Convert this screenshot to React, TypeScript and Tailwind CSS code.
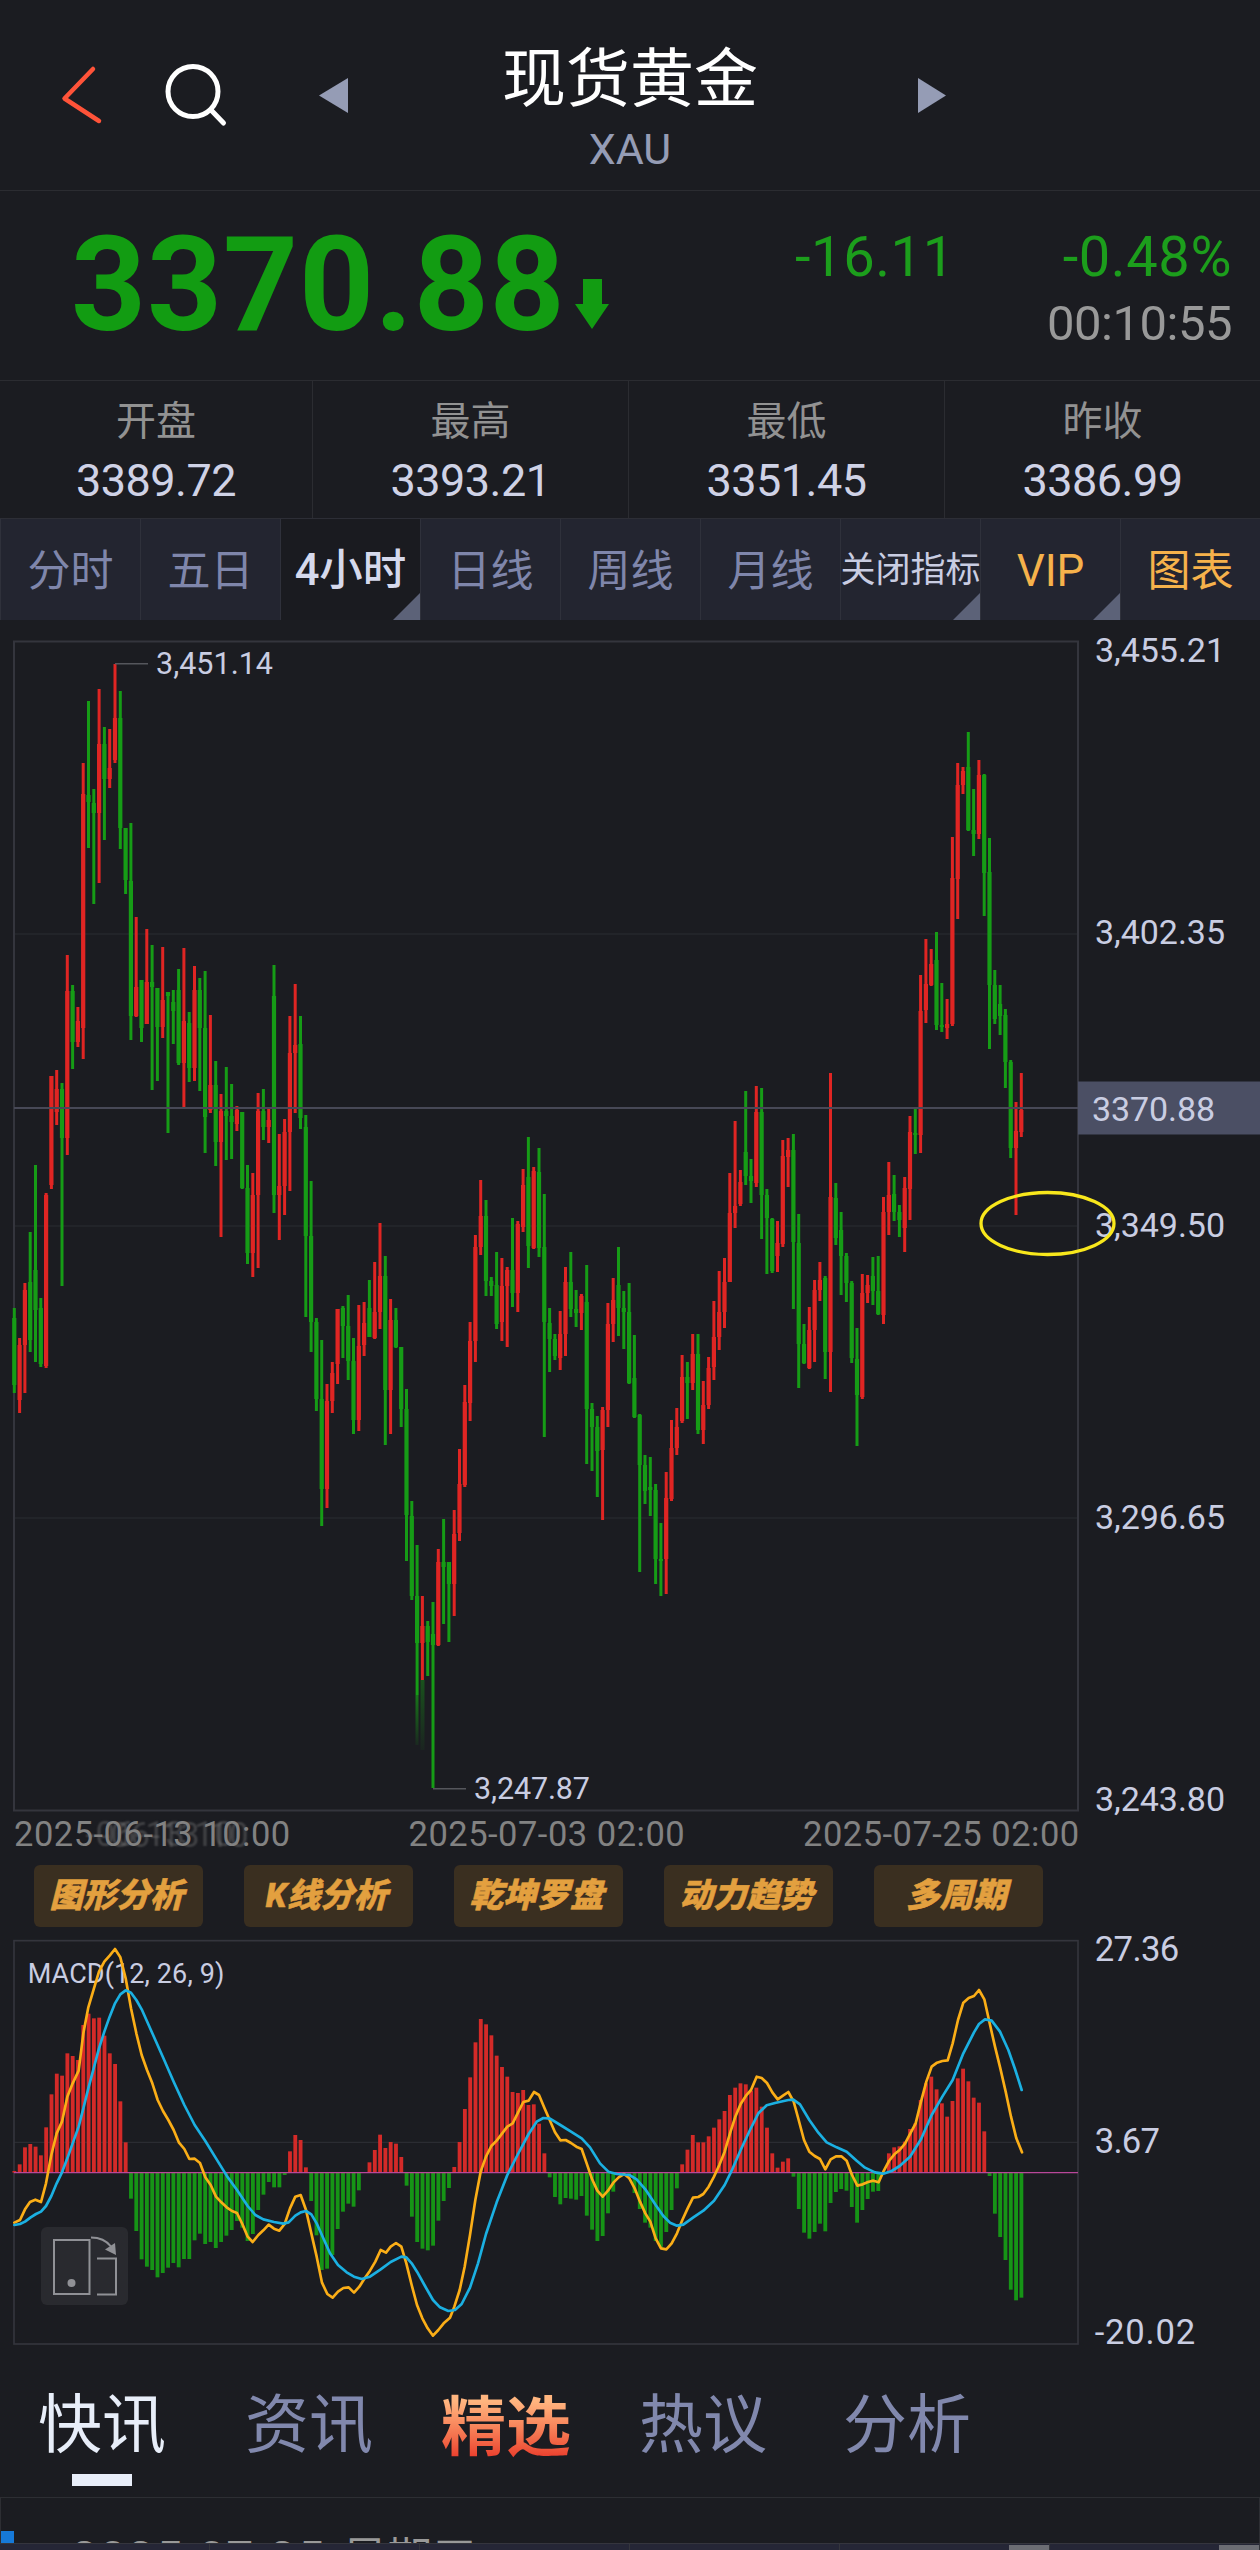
import { useState } from 'react';

const UP = '#e02523';
const DOWN = '#169c16';
const STEP = 5.3;
const FIRST_X = 14.3;

// color, high, body top, body bottom, low
const candles = `
g 1308 1318 1385 1393|r 1338 1345 1400 1413|r 1283 1290 1345 1393|g 1232 1282 1340 1352|g 1165 1270 1310 1362|g 1298 1308 1364 1367|r 1193 1195 1366 1368|r 1076 1076 1185 1189|r 1070 1089 1112 1125|g 1083 1089 1138 1286|
r 955 991 1138 1155|g 985 991 1042 1069|r 1007 1021 1042 1047|r 763 794 1028 1059|g 701 795 802 848|g 789 803 813 904|r 689 744 813 883|g 727 744 779 840|r 729 768 779 788|r 664 718 760 763|
g 691 718 828 849|g 828 828 880 894|g 823 881 1016 1040|r 917 987 1016 1017|g 980 980 1028 1042|r 929 982 1024 1024|g 945 982 987 1090|g 988 988 1027 1081|r 947 1000 1027 1038|g 992 992 996 1133|
g 990 1002 1011 1044|g 969 990 1063 1065|r 948 1021 1063 1109|g 1012 1023 1068 1082|r 966 990 1068 1081|g 978 990 1028 1091|g 971 1028 1117 1153|r 1015 1085 1110 1113|g 1061 1085 1142 1166|r 1094 1111 1142 1237|
g 1067 1111 1116 1160|g 1084 1116 1122 1159|r 1106 1110 1124 1131|g 1112 1112 1188 1189|g 1165 1188 1253 1264|r 1173 1195 1253 1277|r 1093 1111 1195 1268|g 1089 1111 1127 1140|r 1109 1120 1127 1143|g 965 996 1195 1213|
r 1134 1186 1195 1240|r 1119 1132 1186 1215|r 1016 1053 1132 1191|r 984 1045 1053 1113|g 1016 1044 1118 1129|g 1115 1127 1236 1317|g 1181 1236 1322 1352|g 1318 1322 1399 1411|g 1340 1399 1489 1526|r 1384 1401 1489 1508|
r 1362 1373 1401 1413|r 1309 1309 1364 1384|g 1306 1308 1326 1358|g 1295 1326 1361 1380|g 1338 1361 1420 1434|r 1305 1346 1420 1431|r 1302 1323 1345 1356|g 1280 1308 1337 1337|r 1262 1312 1338 1339|r 1223 1276 1312 1329|
g 1256 1276 1390 1445|r 1299 1320 1390 1434|g 1308 1320 1347 1348|g 1347 1347 1409 1427|g 1389 1409 1515 1561|g 1501 1516 1596 1600|g 1545 1596 1643 1695|r 1596 1626 1643 1680|g 1621 1626 1642 1676|g 1602 1634 1645 1788|
r 1549 1562 1645 1646|g 1519 1562 1567 1624|g 1562 1562 1584 1642|r 1510 1534 1584 1616|r 1449 1484 1533 1541|r 1385 1402 1485 1487|r 1322 1341 1403 1421|r 1235 1247 1341 1362|r 1180 1216 1247 1255|g 1200 1216 1281 1296|
g 1277 1281 1286 1296|g 1252 1285 1324 1329|r 1258 1286 1322 1341|r 1267 1270 1286 1347|g 1218 1270 1293 1307|r 1221 1224 1293 1312|r 1169 1185 1227 1232|g 1137 1177 1246 1268|r 1167 1171 1248 1249|g 1148 1172 1248 1257|
g 1194 1247 1322 1437|g 1308 1323 1339 1372|g 1334 1339 1356 1360|r 1311 1334 1358 1370|r 1267 1282 1334 1356|g 1252 1282 1309 1317|g 1290 1309 1313 1327|r 1294 1296 1313 1330|g 1265 1302 1409 1464|g 1403 1409 1427 1471|
g 1416 1427 1451 1497|r 1407 1410 1450 1520|r 1303 1324 1410 1427|r 1278 1300 1324 1342|g 1247 1285 1308 1336|g 1291 1308 1312 1349|g 1283 1312 1383 1384|g 1335 1378 1417 1418|g 1414 1415 1465 1572|g 1455 1465 1491 1504|
g 1457 1487 1490 1516|g 1484 1490 1559 1584|g 1523 1559 1561 1596|r 1472 1498 1559 1594|r 1420 1448 1499 1501|r 1408 1427 1448 1455|r 1355 1377 1421 1423|g 1362 1377 1383 1419|r 1334 1354 1383 1390|g 1334 1354 1430 1434|
r 1381 1405 1430 1444|r 1357 1368 1405 1409|r 1301 1337 1367 1380|r 1271 1312 1337 1350|r 1258 1282 1312 1328|r 1173 1213 1282 1282|r 1121 1206 1213 1228|r 1170 1182 1204 1206|g 1091 1152 1176 1185|g 1159 1176 1181 1203|
r 1086 1112 1183 1187|g 1088 1112 1195 1239|g 1189 1195 1218 1274|g 1218 1219 1271 1273|r 1221 1243 1256 1272|r 1140 1156 1244 1247|r 1138 1150 1157 1187|g 1134 1150 1242 1309|g 1214 1243 1344 1388|g 1324 1344 1363 1364|
r 1307 1330 1368 1369|r 1280 1290 1330 1362|r 1262 1280 1290 1301|g 1276 1278 1352 1379|r 1073 1197 1352 1392|g 1183 1198 1238 1245|g 1212 1230 1256 1295|g 1253 1256 1283 1302|g 1281 1283 1358 1363|g 1328 1359 1395 1446|
r 1274 1293 1397 1399|r 1275 1285 1293 1303|g 1257 1276 1291 1305|g 1256 1291 1314 1315|r 1197 1212 1315 1324|r 1162 1195 1212 1235|g 1175 1194 1212 1221|g 1205 1212 1220 1237|r 1177 1188 1228 1252|r 1116 1132 1189 1220|
g 1109 1133 1134 1154|r 975 1011 1135 1153|r 939 984 1010 1023|r 949 964 985 986|g 932 960 1025 1030|g 983 1025 1027 1032|r 999 1024 1028 1039|r 837 878 1024 1026|r 763 785 879 919|r 767 771 785 794|
g 732 767 830 831|g 789 830 834 856|r 760 775 834 839|g 774 775 873 916|g 838 872 985 1049|g 970 985 1019 1024|g 985 1004 1016 1035|g 1009 1015 1062 1088|g 1060 1062 1148 1158|r 1102 1131 1148 1215|
r 1073 1110 1132 1137`
  .split('|')
  .map((row) => {
    const [dir, ...nums] = row.trim().split(' ');
    const [high, top, bottom, low] = nums.map(Number);
    return { color: dir === 'r' ? UP : DOWN, high, top, bottom, low };
  });

// MACD panel is drawn on a 3x grid, zero line at 758
const ZERO = 758;
const bars = [
  753, 733, 682, 672, 680, 706, 622, 523, 461, 467, 400, 408, 420, 315, 281, 295, 293, 347, 400, 432, 544, 667, 836, 933,
  1018, 1040, 1050, 1072, 1059, 1043, 1029, 1042, 1017, 1017, 961, 941, 972, 966, 984, 966, 947, 930, 903, 923, 963, 942,
  870, 824, 786, 802, 802, 765, 694, 645, 660, 742, 843, 946, 1050, 1046, 1005, 927, 875, 851, 860, 811, 758, 727, 690,
  644, 684, 666, 671, 711, 797, 890, 966, 986, 991, 977, 902, 843, 804, 741, 666, 567, 472, 367, 297, 313, 346, 407, 441,
  470, 516, 519, 510, 555, 553, 611, 700, 772, 831, 853, 834, 836, 839, 828, 887, 929, 963, 948, 880, 815, 765, 758, 766,
  819, 867, 908, 923, 963, 982, 936, 870, 805, 733, 689, 645, 667, 667, 649, 623, 598, 573, 525, 503, 490, 493, 512, 503,
  560, 623, 700, 743, 725, 715, 770, 867, 938, 956, 936, 911, 934, 849, 816, 807, 812, 861, 908, 870, 837, 815, 813, 758,
  700, 682, 679, 665, 627, 610, 540, 490, 470, 508, 550, 590, 543, 475, 446, 484, 533, 548, 634, 768, 881, 951, 1020, 1109,
  1141, 1133,
];

const difLine =
  '43,908 60,900 75,868 90,846 106,839 123,846 138,790 154,705 170,640 186,605 202,530 218,490 236,452 250,340 265,262 281,208 297,155 313,125 329,107 345,87 361,112 377,175 393,265 409,340 425,405 441,450 457,490 473,540 489,573 505,600 521,630 537,668 553,687 568,717 584,716 600,729 616,772 632,795 648,830 664,847 680,862 696,873 711,879 727,912 743,950 758,966 775,945 790,931 806,914 822,926 838,932 854,912 870,865 886,830 902,825 918,870 934,940 950,1010 966,1088 982,1122 998,1133 1014,1115 1030,1104 1046,1102 1062,1118 1078,1100 1094,1075 1110,1052 1126,1025 1142,990 1158,998 1172,980 1188,969 1204,980 1219,1030 1235,1095 1251,1155 1267,1195 1283,1225 1299,1247 1315,1230 1331,1210 1350,1193 1363,1160 1379,1110 1394,1040 1410,945 1426,840 1442,755 1458,710 1474,678 1490,662 1506,641 1522,620 1538,610 1554,578 1570,546 1586,542 1602,516 1617,525 1633,563 1649,600 1665,637 1681,661 1697,660 1713,669 1729,680 1745,687 1760,730 1776,777 1792,812 1808,830 1824,812 1840,788 1856,772 1872,762 1888,775 1904,805 1920,845 1936,880 1951,905 1967,955 1983,985 1999,988 2015,970 2031,940 2047,900 2063,865 2079,833 2095,831 2110,822 2126,800 2142,770 2158,735 2174,695 2190,640 2206,590 2222,552 2238,527 2253,510 2270,470 2285,474 2301,489 2317,517 2333,538 2349,527 2365,516 2381,545 2396,600 2412,660 2428,695 2444,708 2460,717 2476,748 2492,718 2508,709 2524,709 2540,722 2556,765 2572,797 2588,793 2604,786 2620,782 2636,787 2650,755 2667,723 2683,703 2699,690 2715,671 2731,640 2747,610 2763,545 2779,485 2795,440 2811,428 2827,423 2843,421 2858,370 2874,300 2890,248 2906,234 2922,228 2937,210 2953,238 2969,310 2985,380 3001,445 3017,515 3033,590 3049,655 3066,697';

const deaLine =
  '43,915 60,912 75,905 92,892 108,882 123,875 138,858 154,828 170,790 186,757 202,715 218,670 236,620 250,565 265,505 281,445 297,385 313,335 329,290 345,250 361,223 377,211 393,218 409,240 425,268 457,340 489,412 521,485 553,555 584,615 616,663 648,715 680,767 711,810 743,858 766,885 790,898 822,906 850,911 866,907 886,887 902,877 918,873 934,883 950,910 970,955 990,1000 1014,1035 1040,1057 1062,1070 1085,1077 1110,1070 1142,1048 1172,1026 1204,1010 1219,1012 1235,1030 1251,1055 1275,1098 1299,1140 1320,1162 1345,1173 1365,1170 1385,1152 1410,1103 1434,1030 1458,942 1490,847 1522,765 1554,702 1586,642 1610,605 1630,594 1650,596 1681,615 1713,635 1745,655 1770,682 1800,730 1825,755 1850,762 1888,765 1910,778 1936,808 1967,855 1990,888 2010,908 2031,917 2050,914 2079,893 2110,872 2142,842 2174,795 2195,752 2222,690 2250,630 2275,580 2300,556 2325,549 2365,540 2380,539 2400,553 2428,600 2455,638 2480,667 2510,682 2540,695 2570,722 2595,743 2625,757 2650,761 2675,753 2699,738 2730,710 2763,658 2795,585 2827,530 2858,480 2890,400 2922,337 2937,312 2955,298 2975,302 3000,335 3025,390 3045,447 3065,510';

const stats = [
  { label: '开盘', value: '3389.72' },
  { label: '最高', value: '3393.21' },
  { label: '最低', value: '3351.45' },
  { label: '昨收', value: '3386.99' },
];

const periods = [
  { label: '分时', className: 'text-[43px] text-[#7f86ab]' },
  { label: '五日', className: 'text-[43px] text-[#7f86ab]' },
  { label: '4小时', className: 'text-[43.500px] font-medium text-[#d5d9ec]', corner: true },
  { label: '日线', className: 'text-[43px] text-[#7f86ab]' },
  { label: '周线', className: 'text-[43px] text-[#7f86ab]' },
  { label: '月线', className: 'text-[43px] text-[#7f86ab]' },
  { label: '关闭指标', className: 'text-[35px] text-[#c9cde2]', corner: true },
  { label: 'VIP', className: 'text-[44px] text-[#f6b24b]', corner: true },
  { label: '图表', className: 'text-[43px] text-[#f6b24b]' },
];

const tools = ['图形分析', 'K线分析', '乾坤罗盘', '动力趋势', '多周期'];

const priceAxis = [
  { text: '3,455.21', y: 662 },
  { text: '3,402.35', y: 944 },
  { text: '3,349.50', y: 1236.5 },
  { text: '3,296.65', y: 1528.5 },
  { text: '3,243.80', y: 1811 },
];

function Header() {
  return (
    <header className="h-[191px] border-b border-[#2b2c31] flex items-start">
      <svg className="w-[360px] h-[190px] shrink-0" viewBox="0 0 360 190" fill="none">
        <path d="M93 69 64.5 98.500 99 121" stroke="#ff5339" strokeWidth="4.500" strokeLinecap="round" strokeLinejoin="round" />
        <circle cx="193" cy="91.500" r="25" stroke="#fff" strokeWidth="5" />
        <path d="M211 110l12.500 13" stroke="#fff" strokeWidth="5" strokeLinecap="round" />
        <path d="M348 78v35l-29-17.500z" fill="#959cb5" />
      </svg>
      <div className="w-[540px] pt-[45px] flex flex-col items-center">
        <h1 className="text-[64px] leading-[70px] text-white">现货黄金</h1>
        <div className="mt-[9px] text-[43px] leading-[50px] text-[#959cb5]">XAU</div>
      </div>
      <svg className="w-[60px] h-[190px] shrink-0" viewBox="900 0 60 190">
        <path d="M918 78v35l28-17.500z" fill="#959cb5" />
      </svg>
    </header>
  );
}

function Quote() {
  return (
    <section className="h-[190px] border-b border-[#2b2c31] flex justify-between pl-[71px] pr-[28px]">
      <div className="flex text-[#129c12]">
        <span className="pt-[29px] text-[131px] leading-[130px] font-bold tracking-[0.8px]">3370.88</span>
        <svg className="ml-[9px] mt-[88px] w-[34px] h-[50px]" viewBox="0 0 34 50">
          <path d="M8 0h19v25h7L17 50 0 25h8z" fill="#129c12" />
        </svg>
      </div>
      <div className="flex flex-col items-end">
        <div className="mt-9 flex gap-[108px] text-[56px] leading-[60px] tracking-[0.6px] text-[#1c9e1c]">
          <span>-16.11</span>
          <span>-0.48%</span>
        </div>
        <div className="mt-[7px] text-[49px] leading-[60px] tracking-[-0.5px] text-[#999]">00:10:55</div>
      </div>
    </section>
  );
}

function Stats() {
  return (
    <section className="h-[137px] grid grid-cols-[313px_316px_316px_315px]">
      {stats.map((s) => (
        <div key={s.label} className="border-r border-[#2b2c31] last:border-r-0 flex flex-col items-center pt-[17px]">
          <div className="text-[40px] leading-[48px] text-[#929292]">{s.label}</div>
          <div className="mt-[7px] text-[45px] leading-[56px] tracking-[-0.500px] text-[#cfd2e6]">{s.value}</div>
        </div>
      ))}
    </section>
  );
}

function Periods() {
  const [active, setActive] = useState('4小时');

  return (
    <nav className="h-[102px] grid grid-cols-9 border-t border-[#2d2e36]">
      {periods.map((p) => (
        <button
          key={p.label}
          onClick={() => setActive(p.label)}
          className={`relative border-l border-[#2f313b] pt-[3px] whitespace-nowrap flex items-center justify-center ${p.className} ${active === p.label ? 'bg-[#1a1b20]' : 'bg-[#232530]'}`}
        >
          {p.label}
          {p.corner && (
            <svg className="absolute right-0 bottom-0 w-[27px] h-[27px]" viewBox="0 0 27 27">
              <path d="M27 0v27H0z" fill="#5c6278" />
            </svg>
          )}
        </button>
      ))}
    </nav>
  );
}

function CandleChart() {
  return (
    <svg className="block w-[1260px] h-[1195px] overflow-visible" viewBox="0 620 1260 1195">
      <defs>
        <linearGradient id="fade-green" x1="0" y1="0" x2="0" y2="1">
          <stop offset="0" stopColor="#169c16" stopOpacity="0.700" />
          <stop offset="1" stopColor="#169c16" stopOpacity="0.100" />
        </linearGradient>
      </defs>
      {[934, 1226, 1518].map((y) => (
        <path key={y} d={`M14 ${y}H1078`} stroke="#26272c" strokeWidth="1.300" />
      ))}
      <rect x="14" y="641.500" width="1064" height="1169" fill="none" stroke="#34353d" strokeWidth="2" />

      {candles.map((c, i) => {
        const x = FIRST_X + i * STEP;
        return (
          <g key={i} fill={c.color}>
            <rect x={x - 1.5} y={c.high} width="3" height={c.low - c.high} />
            <rect x={x - 2.1} y={c.top} width="4.200" height={Math.max(c.bottom - c.top, 2)} />
          </g>
        );
      })}
      <rect x="415.500" y="1695" width="3" height="50" fill="url(#fade-green)" />
      <rect x="420.500" y="1680" width="4" height="70" fill="url(#fade-green)" opacity="0.600" />

      <path d="M14 1108H1078" stroke="#474856" strokeWidth="1.800" />
      <path d="M115 663.700H148M433 1788.700H466" stroke="#55565c" strokeWidth="1.500" />
      <g className="text-[30.500px]" fill="#c9cde2">
        <text x="156" y="674" textLength="117">3,451.14</text>
        <text x="474" y="1799" textLength="116">3,247.87</text>
      </g>

      <g className="text-[34px]" fill="#c9cde2">
        {priceAxis.map((p) => (
          <text key={p.text} x="1095" y={p.y} textLength="130">{p.text}</text>
        ))}
        <rect x="1078" y="1081.500" width="182" height="53" fill="#4b4f64" />
        <text x="1092" y="1121" textLength="123">3370.88</text>
      </g>
      <ellipse cx="1047.500" cy="1223.500" rx="66.500" ry="31" fill="none" stroke="#f8e71c" strokeWidth="3.300" />
    </svg>
  );
}

function MacdChart() {
  return (
    <div className="relative">
      <svg className="block w-[1260px] h-[420px] overflow-visible" viewBox="0 45 3780 1260">
        <path d="M42 667H3234" stroke="#2b2c32" strokeWidth="4" />
        <rect x="42" y="62" width="3192" height="1210" fill="none" stroke="#34353d" strokeWidth="5" />
        <text x="83" y="188" textLength="590" className="text-[81px]" fill="#c9cde2">MACD(12, 26, 9)</text>
        {bars.map((v, i) => {
          const x = (FIRST_X + i * STEP) * 3 - 5.5;
          return v < ZERO ? (
            <rect key={i} x={x} y={v} width="11.500" height={ZERO - v} fill="#d42a28" />
          ) : (
            <rect key={i} x={x} y={ZERO} width="11.500" height={v - ZERO} fill="#169416" />
          );
        })}
        <path d={`M42 ${ZERO}H3234`} stroke="#b9479a" strokeWidth="4" />
        <g fill="none" strokeWidth="8" strokeLinejoin="round" strokeLinecap="round">
          <polyline points={difLine} stroke="#fbae17" />
          <polyline points={deaLine} stroke="#1bb0e2" />
        </g>
        <g className="text-[104px]" fill="#c9cde2">
          <text x="3284" y="123" textLength="254">27.36</text>
          <text x="3284" y="698" textLength="196">3.67</text>
          <text x="3284" y="1271" textLength="302">-20.02</text>
        </g>
      </svg>
      <button className="absolute left-[41px] top-[292px] w-[87px] h-[78px] rounded-md bg-[#2b2c31]/90">
        <svg className="w-[87px] h-[78px]" viewBox="0 0 87 78" fill="none" stroke="#909196" strokeWidth="2">
          <path d="M13 13h35.500v54H13zM56 31.500h19v36H56" />
          <circle cx="30.500" cy="56" r="4" fill="#909196" stroke="none" />
          <path d="M50 10.500q13 0 20 9" />
          <path d="M64 22.500l10-6.500 1 12z" fill="#909196" stroke="none" />
        </svg>
      </button>
    </div>
  );
}

function NewsTabs() {
  return (
    <nav className="mt-[35px] h-[108px] flex pl-[38px] text-[64px] leading-[72px] text-[#8188ad] border-b border-[#2d2e33]">
      <button className="w-[207px] flex flex-col items-start text-[#e8eef9]">
        快讯
        <span className="ml-[34px] mt-3 w-[60px] h-3 bg-[#e8eef9]" />
      </button>
      <button className="w-[196px] text-left self-start">资讯</button>
      <button className="w-[198px] pt-[2px] text-left self-start text-[65px] font-bold bg-gradient-to-b from-[#ffb57f] from-15% to-[#ea3f2e] to-90% bg-clip-text text-transparent">
        精选
      </button>
      <button className="w-[204px] text-left self-start">热议</button>
      <button className="text-left self-start">分析</button>
    </nav>
  );
}

export default function App() {
  return (
    <main className="w-[1260px] h-[2550px] overflow-hidden bg-[#1b1c21] font-[Roboto,'Noto_Sans_CJK_SC',sans-serif] flex flex-col [&>*]:shrink-0">
      <Header />
      <Quote />
      <Stats />
      <Periods />
      <CandleChart />

      <div className="h-[42px] w-[1078px] pl-[14px] flex justify-between text-[34.500px] leading-[38px] text-[#828282] tracking-[0.500px] whitespace-nowrap">
        <span className="w-[275px]">
          2025<span className="[text-shadow:-8px_0_2px_#82828260,7px_1px_2px_#82828260]">-06-13 10</span>:00
        </span>
        <span className="w-[275px]">2025-07-03 02:00</span>
        <span className="w-[275px]">2025-07-25 02:00</span>
      </div>

      <div className="pl-[34px] mt-2 mb-2 flex gap-[41px]">
        {tools.map((t) => (
          <button key={t} className="w-[169px] h-[62px] pr-1 rounded-md bg-[#3a2f20] text-[33.500px] font-black italic text-[#e3a03f] [-webkit-text-stroke:0.500px_#e3a03f]">
            {t}
          </button>
        ))}
      </div>

      <MacdChart />
      <NewsTabs />

      <section className="h-[45px] overflow-hidden border-x border-[#2d2e33] flex items-start text-[#999] whitespace-nowrap">
        <span className="mt-[33px] w-[13px] h-3 bg-[#1679d8]" />
        <div className="ml-[57px] mt-[33px] flex items-baseline gap-[17px] leading-[56px]">
          <span className="text-[48px] tracking-[1.200px]">2025-07-25</span>
          <span className="text-[45px]">星期五</span>
        </div>
      </section>
      <div className="h-[7px] bg-[#252636] border-t border-[#34353d] grid grid-cols-6">
        {[1, 2, 3, 4, 5, 6].map((n) => (
          <div key={n} className="border-r border-[#34353d] flex items-end justify-end">
            {n > 4 && <span className="w-10 h-[5px] bg-[#6c6d74]" />}
          </div>
        ))}
      </div>
    </main>
  );
}
